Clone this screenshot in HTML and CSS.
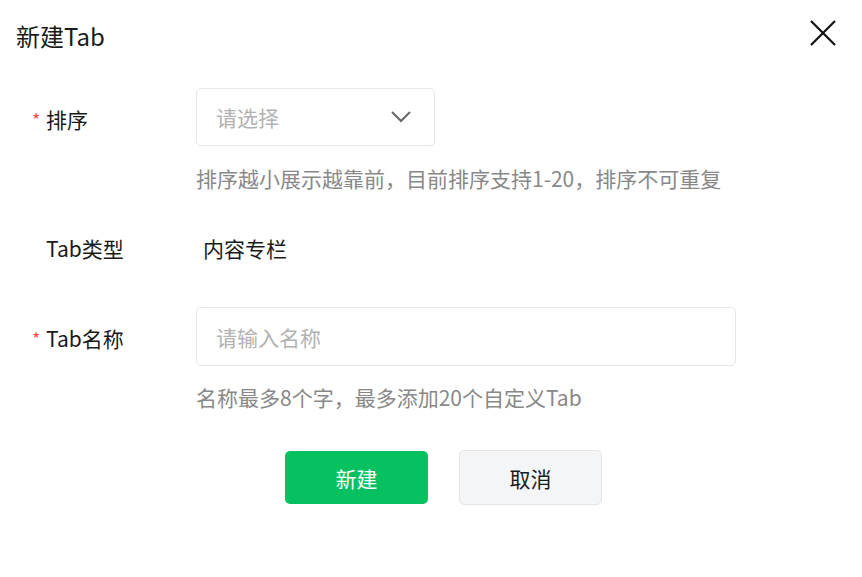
FILE: index.html
```html
<!DOCTYPE html>
<html lang="zh-CN">
<head>
<meta charset="utf-8">
<title>新建Tab</title>
<link rel="stylesheet" href="styles.css">
</head>
<body>
<div class="dialog">
  <div class="header">
    <div class="title">新建Tab</div>
    <svg class="close" width="28" height="28" viewBox="0 0 28 28"><path d="M2 2 L26 26 M26 2 L2 26" stroke="#111" stroke-width="2.2" fill="none"/></svg>
  </div>
  <div class="form">
    <div class="row row-sort">
      <div class="label"><span class="req">*</span>排序</div>
      <div class="field">
        <div class="select">
          <span class="placeholder">请选择</span>
          <svg class="chev" width="20" height="12" viewBox="0 0 20 12"><polyline points="1,1 10,10 19,1" stroke="#666" stroke-width="2" fill="none"/></svg>
        </div>
        <div class="help help-sort">排序越小展示越靠前，目前排序支持1-20，排序不可重复</div>
      </div>
    </div>
    <div class="row row-type">
      <div class="label label-plain">Tab类型</div>
      <div class="value">内容专栏</div>
    </div>
    <div class="row row-name">
      <div class="label"><span class="req">*</span>Tab名称</div>
      <div class="field">
        <div class="input"><span class="placeholder">请输入名称</span></div>
        <div class="help help-name">名称最多8个字，最多添加20个自定义Tab</div>
      </div>
    </div>
    <div class="actions">
      <button class="btn btn-primary">新建</button>
      <button class="btn btn-default">取消</button>
    </div>
  </div>
</div>
</body>
</html>
```
FILE: styles.css
```css
* { box-sizing: border-box; }
html, body { margin: 0; padding: 0; background: #fff; }
body {
  font-family: "Noto Sans CJK SC", "Noto Sans", sans-serif;
  color: #1a1a1a;
  font-size: 21px;
}
.dialog {
  width: 862px;
  height: 577px;
  overflow: hidden;
}
.header {
  display: flex;
  justify-content: space-between;
  align-items: flex-start;
  padding: 21px 25px 0 16px;
  height: 53px;
}
.title {
  font-size: 24px;
  line-height: 30px;
}
.close {
  margin-top: -2px;
}
.form {
  padding-top: 35px;
}
.row {
  display: flex;
  align-items: flex-start;
}
.label {
  width: 196px;
  padding-left: 32px;
  line-height: 58px;
  padding-top: 2px;
  white-space: nowrap;
}
.req {
  color: #fa5151;
  display: inline-block;
  width: 14px;
  font-size: 18px;
  vertical-align: top;
}
.label-plain {
  padding-left: 46px;
  padding-top: 0;
  line-height: 28px;
}
.field {
  display: flex;
  flex-direction: column;
}
.select {
  width: 239px;
  height: 58px;
  border: 1px solid #e7e7e7;
  border-radius: 5px;
  display: flex;
  align-items: center;
  justify-content: space-between;
  padding: 0 23px 0 19px;
}
.placeholder {
  color: #b2b2b2;
}
.help {
  color: #888;
  line-height: 28px;
  white-space: nowrap;
}
.help-sort { margin-top: 18px; }
.row-type { margin-top: 42px; }
.value {
  line-height: 28px;
  padding-left: 7px;
}
.row-name { margin-top: 45px; }
.input {
  width: 540px;
  height: 59px;
  border: 1px solid #e7e7e7;
  border-radius: 5px;
  display: flex;
  align-items: center;
  padding: 0 19px;
}
.help-name { margin-top: 17px; }
.actions {
  display: flex;
  align-items: center;
  gap: 31px;
  padding-left: 285px;
  margin-top: 39px;
}
.btn {
  font-family: inherit;
  font-size: 21px;
  width: 143px;
  border-radius: 5px;
  cursor: pointer;
}
.btn-primary {
  height: 53px;
  background: #07c160;
  color: #fff;
  border: none;
}
.btn-default {
  height: 55px;
  background: #f4f5f7;
  color: #1a1a1a;
  border: 1px solid #e5e5e5;
}
```
